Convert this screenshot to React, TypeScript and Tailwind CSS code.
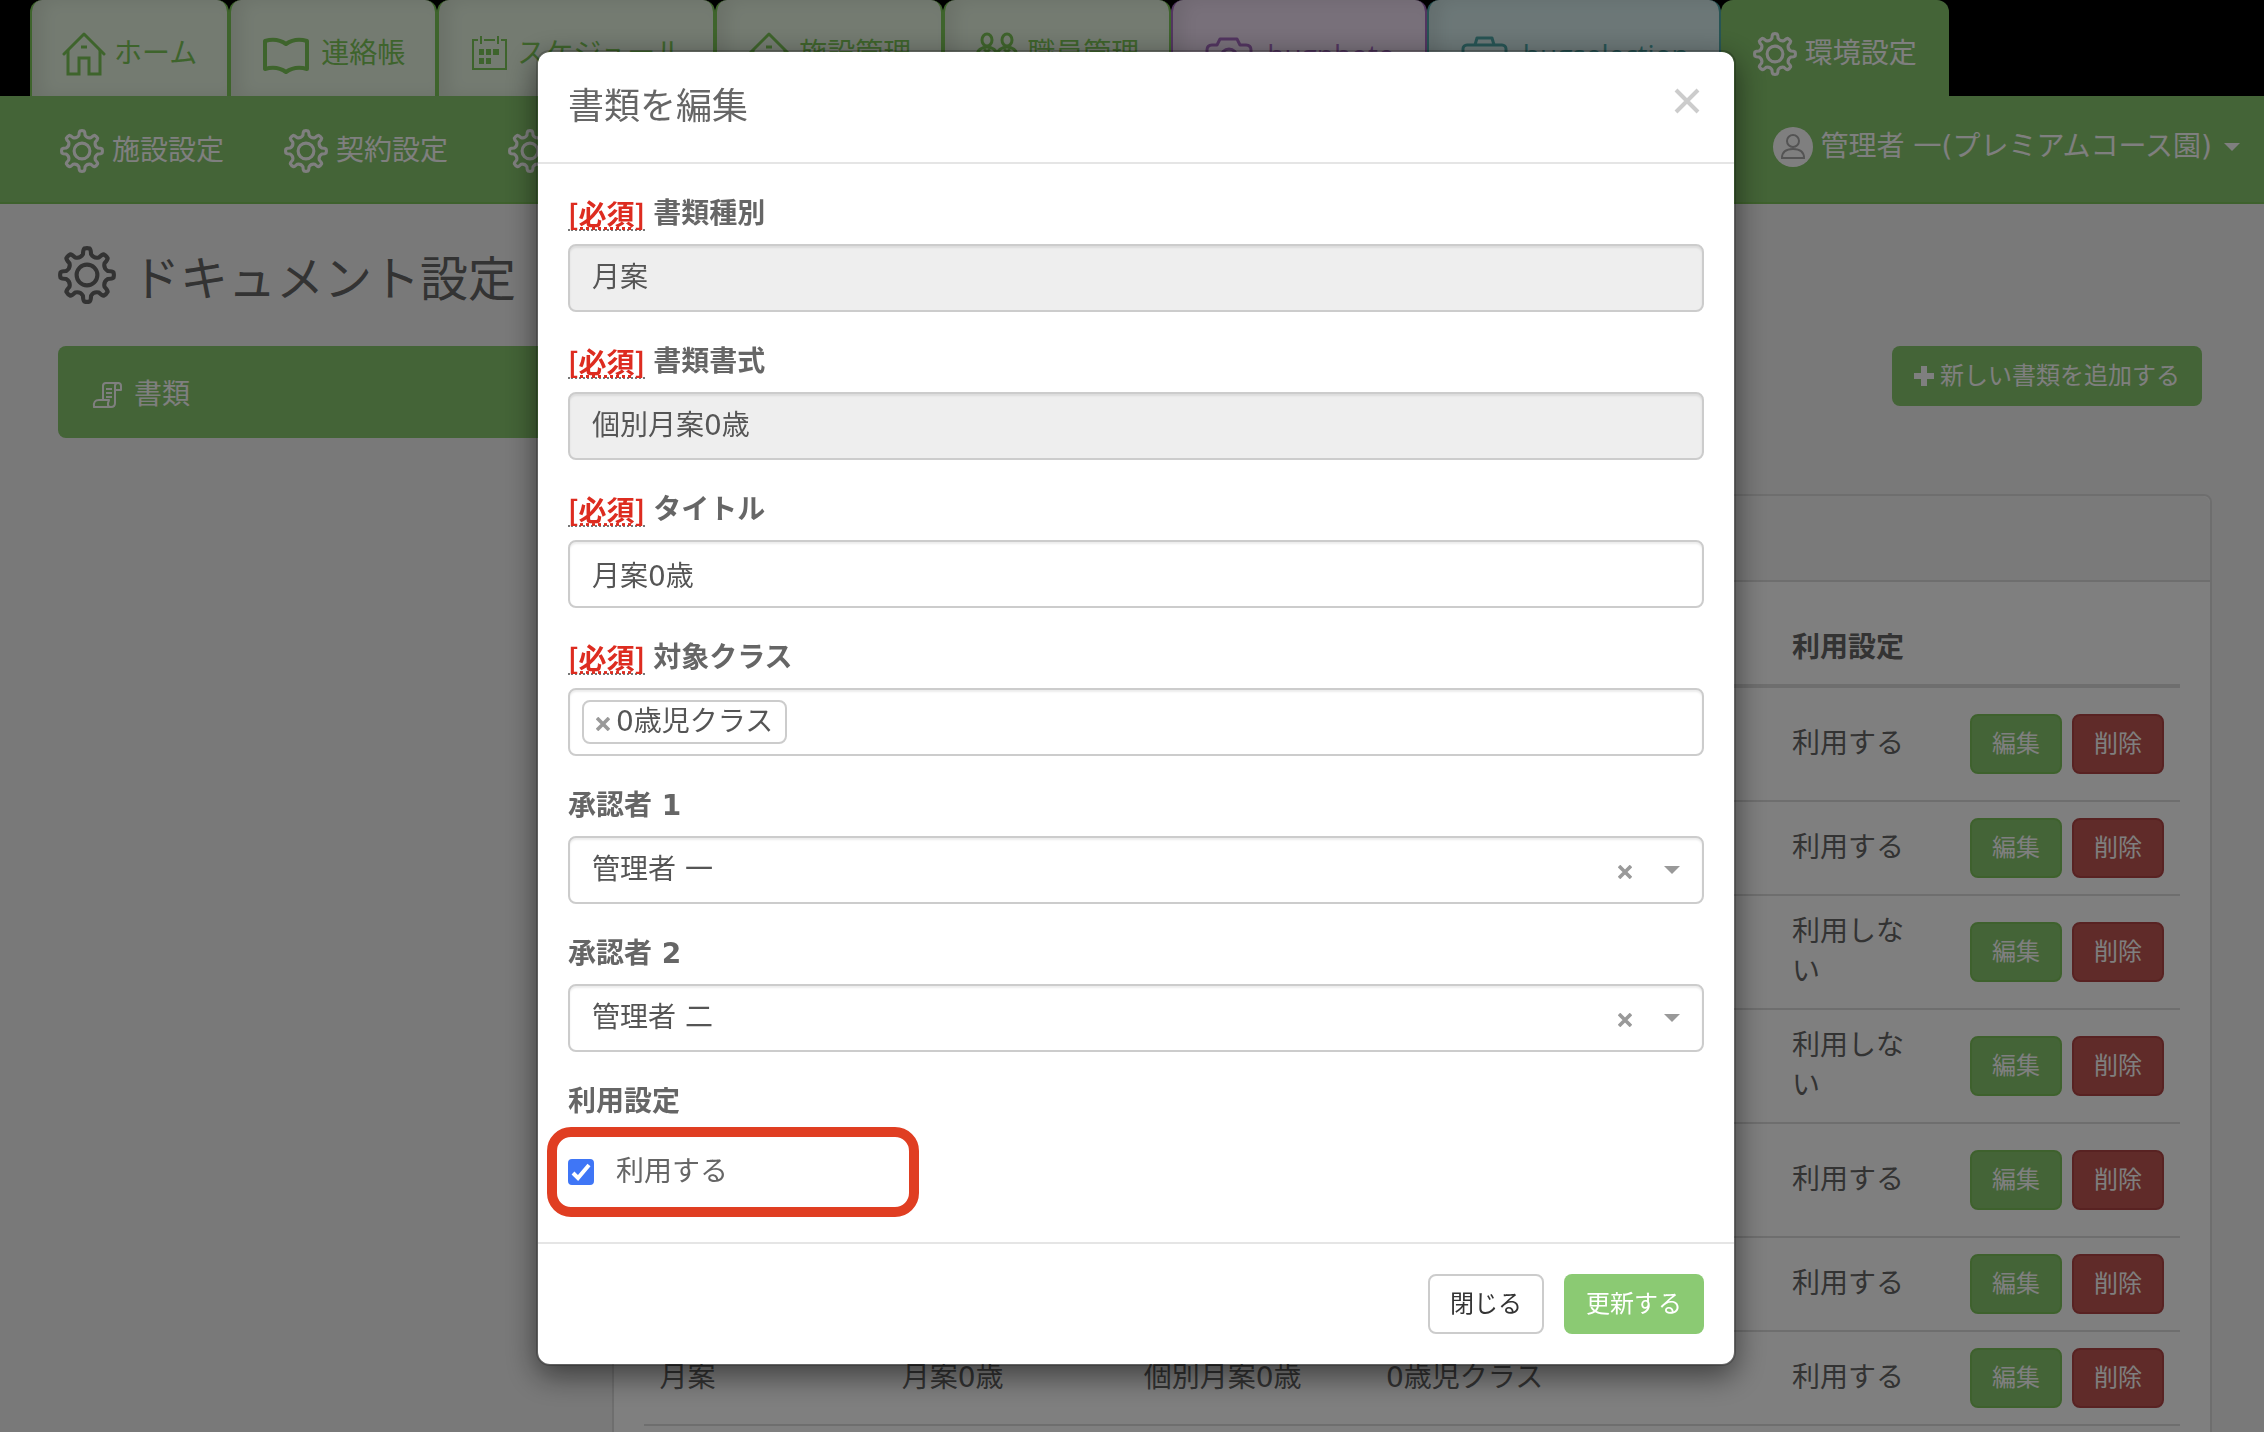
import { useState } from 'react';
import type { ReactNode } from 'react';

interface Tab {
  label: string;
  icon: ReactNode;
  className: string;
}

interface DocumentRow {
  id: number;
  type: string;
  title: string;
  format: string;
  classes: string;
  enabled: boolean;
}

const documents: DocumentRow[] = [
  { id: 1, type: '月案', title: '月案', format: '月案', classes: '0歳児クラス 1歳児クラス', enabled: true },
  { id: 2, type: '週案', title: '週案', format: '週案', classes: '1歳児クラス', enabled: true },
  { id: 3, type: '週案', title: '週案', format: '週案', classes: '2歳児クラス', enabled: false },
  { id: 4, type: '日案', title: '日案', format: '日案', classes: '2歳児クラス', enabled: false },
  { id: 5, type: '年案', title: '年案', format: '年案', classes: '0歳児クラス 1歳児クラス', enabled: true },
  { id: 6, type: '月案', title: '月案1歳', format: '個別月案1歳', classes: '1歳児クラス', enabled: true },
  { id: 7, type: '月案', title: '月案0歳', format: '個別月案0歳', classes: '0歳児クラス', enabled: true },
];

// eight teeth round a 48x48 box
const gearPath = (() => {
  const points: string[] = [];
  const at = (r: number, deg: number) => {
    const a = ((deg - 90) * Math.PI) / 180;
    return `${(24 + r * Math.cos(a)).toFixed(2)} ${(24 + r * Math.sin(a)).toFixed(2)}`;
  };
  for (let i = 0; i < 8; i++) {
    const c = i * 45;
    points.push(`${i === 0 ? 'M' : 'L'}${at(17.5, c - 11)}`);
    points.push(`Q${at(21, c - 9)} ${at(22, c - 6)}`);
    points.push(`Q${at(22.6, c)} ${at(22, c + 6)}`);
    points.push(`Q${at(21, c + 9)} ${at(17.5, c + 11)}`);
    points.push(`Q${at(14.6, c + 22.5)} ${at(17.5, c + 34)}`);
  }
  return `${points.join('')}Z`;
})();

function Gear({ className }: { className: string }) {
  return (
    <svg viewBox="0 0 48 48" fill="none" stroke="currentColor" strokeWidth="3.4" strokeLinejoin="round" className={className}>
      <path d={gearPath} />
      <circle cx="24" cy="24" r="8.6" />
    </svg>
  );
}

function House() {
  return (
    <svg viewBox="0 0 44 44" fill="none" stroke="currentColor" strokeWidth="3" className="size-11">
      <path d="M2 22 22 2l20 20" strokeLinecap="round" strokeLinejoin="round" />
      <path d="M6 18v24h11V26h10v16h11V18" />
      <path d="M19 15h6" />
    </svg>
  );
}

function Book() {
  return (
    <svg viewBox="0 0 52 44" fill="none" stroke="currentColor" strokeWidth="4" strokeLinejoin="round" className="h-11 w-[52px]">
      <path d="M4 9c7-2 14-2 21 3 7-5 14-5 21-3v28c-7-2-14-2-21 3-7-5-14-5-21-3Z" />
    </svg>
  );
}

function Calendar() {
  return (
    <svg viewBox="0 0 40 44" fill="none" stroke="currentColor" strokeWidth="2" className="h-11 w-10">
      <path d="M9 8H4v29h33V8h-5M15 8h11M12 4v8M29 4v8" />
      <path d="M10 20h5m2 0h5m2 0h6M10 29h5m2 0h5" strokeWidth="6" />
    </svg>
  );
}

function People() {
  return (
    <svg viewBox="0 0 44 44" fill="none" stroke="currentColor" strokeWidth="3" className="size-11">
      <ellipse cx="12" cy="8" rx="5" ry="6" />
      <ellipse cx="32" cy="8" rx="5" ry="6" />
      <path d="M2 40V24c0-6 5-9 10-9s10 3 10 9c0-6 5-9 10-9s10 3 10 9v16" />
      <path d="m9 17 3 3 3-3m14 0 3 3 3-3" />
    </svg>
  );
}

function Camera() {
  return (
    <svg viewBox="0 0 56 44" fill="none" stroke="currentColor" strokeWidth="3" strokeLinejoin="round" className="h-11 w-14">
      <path d="M17 7h17l3 6h6q5 0 5 5v16q0 5-5 5H9q-5 0-5-5V18q0-5 5-5h5Z" />
      <circle cx="26" cy="25" r="8" />
    </svg>
  );
}

function Briefcase() {
  return (
    <svg viewBox="0 0 56 44" fill="none" stroke="currentColor" strokeWidth="3" strokeLinejoin="round" className="h-11 w-14">
      <rect x="4" y="13" width="43" height="26" rx="4" />
      <path d="M16 13l2-7h15l2 7M4 24h43" />
    </svg>
  );
}

function Scroll() {
  return (
    <svg viewBox="0 0 30 26" fill="none" stroke="currentColor" strokeWidth="2" strokeLinejoin="round" className="h-[26px] w-[30px]">
      <path d="M11 18V4q0-3 3-3h12q-3 0-3 3v17q0 4-4 4H2q-1-7 5-7h10q-3 7 2 7" />
      <path d="M26 1q3 0 3 3v4h-6M14 7h6M14 11h6M14 15h6" />
    </svg>
  );
}

function Caret({ className }: { className: string }) {
  return (
    <svg viewBox="0 0 16 8" fill="currentColor" className={className}>
      <path d="M0 0h16L8 8Z" />
    </svg>
  );
}

function Cross({ className }: { className: string }) {
  return (
    <svg viewBox="0 0 14 14" fill="none" stroke="currentColor" strokeWidth="3.6" className={className}>
      <path d="m1 1 12 12M13 1 1 13" />
    </svg>
  );
}

const greenTab = 'border-[#7dc858] bg-[#e8f6e3] text-[#7dc858]';

const tabs: Tab[] = [
  { label: 'ホーム', icon: <House />, className: greenTab },
  { label: '連絡帳', icon: <Book />, className: greenTab },
  { label: 'スケジュール', icon: <Calendar />, className: greenTab },
  { label: '施設管理', icon: <House />, className: greenTab },
  { label: '職員管理', icon: <People />, className: greenTab },
  { label: 'hugphoto', icon: <Camera />, className: "border-[#a56bc0] bg-[#f0e0f4] font-['Open_Sans',sans-serif] text-[#a56bc0]" },
  { label: 'hugselection', icon: <Briefcase />, className: "border-[#4fa9a9] bg-[#d8efef] font-['Open_Sans',sans-serif] text-[#4fa9a9]" },
];

const subMenu = ['施設設定', '契約設定', 'ドキュメント設定'];

function Header() {
  return (
    <header>
      <nav className="flex h-24 items-start bg-black pl-[30px]">
        {tabs.map(tab => (
          <a
            key={tab.label}
            href="#"
            className={`flex h-24 shrink-0 items-center gap-2 rounded-t-xl border-x-2 px-[30px] pt-3 whitespace-nowrap inset-shadow-[10px_0_16px_rgba(0,0,0,0.08)] ${tab.className}`}
          >
            {tab.icon}
            {tab.label}
          </a>
        ))}
        <a href="#" className="flex h-24 shrink-0 items-center gap-2 rounded-t-xl bg-[#88c86e] px-8 pt-3 text-white">
          <Gear className="size-11" />
          環境設定
        </a>
      </nav>
      <div className="flex h-[108px] items-center justify-between border-b-2 border-[#7dc35a] bg-[#88c86e] pt-1 pr-6 pl-[60px] text-white">
        <nav className="flex gap-[60px]">
          {subMenu.map(label => (
            <a key={label} href="#" className="flex items-center gap-2">
              <Gear className="size-11" />
              {label}
            </a>
          ))}
        </nav>
        <button type="button" className="flex items-center gap-2 pb-2">
          <svg viewBox="0 0 40 40" className="size-10">
            <circle cx="20" cy="20" r="20" fill="currentColor" />
            <g fill="none" stroke="#a8a8a8" strokeWidth="2">
              <circle cx="20" cy="14" r="6" />
              <path d="M9 31q0-9 11-9t11 9Z" />
            </g>
          </svg>
          管理者 一(プレミアムコース園)
          <Caret className="ml-1 h-2 w-4" />
        </button>
      </div>
    </header>
  );
}

function DocumentTable() {
  return (
    <table className="w-full table-fixed text-left">
      <colgroup>
        <col />
        <col />
        <col />
        <col />
        <col className="w-[164px]" />
        <col className="w-[160px]" />
        <col className="w-[244px]" />
      </colgroup>
      <thead>
        <tr className="border-b-4 border-[#ddd]">
          <th className="p-4">書類種別</th>
          <th className="p-4">タイトル</th>
          <th className="p-4">書類書式</th>
          <th className="p-4">対象クラス</th>
          <th className="p-4">承認者</th>
          <th className="p-4">利用設定</th>
          <th className="p-4"></th>
        </tr>
      </thead>
      <tbody>
        {documents.map(doc => (
          <tr key={doc.id} className="border-t-2 border-[#ddd] first:border-t-0 last:border-b-2">
            <td className="p-4">{doc.type}</td>
            <td className="p-4">{doc.title}</td>
            <td className="p-4">{doc.format}</td>
            <td className="p-4">{doc.classes}</td>
            <td className="p-4"></td>
            <td className="p-4">{doc.enabled ? '利用する' : '利用しない'}</td>
            <td className="p-4">
              <div className="flex justify-end gap-[10px] text-2xl text-white">
                <button type="button" className="h-[60px] w-[92px] rounded-lg border-2 border-[#7dc35a] bg-[#88c86e]">
                  編集
                </button>
                <button type="button" className="h-[60px] w-[92px] rounded-lg border-2 border-[#b04444] bg-[#c05752]">
                  削除
                </button>
              </div>
            </td>
          </tr>
        ))}
      </tbody>
    </table>
  );
}

function Field({ id, label, required, children }: { id: string; label: string; required?: boolean; children: ReactNode }) {
  return (
    <div className="mb-[30px]">
      <label htmlFor={id} className="mb-[10px] flex h-10 items-center gap-2 font-bold">
        {required && (
          <abbr
            title="必須"
            className="border-b-2 border-dotted border-[#777] font-['Noto_Sans_CJK_JP',sans-serif] leading-8 text-[#dd2c20]"
          >
            [必須]
          </abbr>
        )}
        {label}
      </label>
      {children}
    </div>
  );
}

const inputClass =
  'block h-[68px] w-full appearance-none rounded-lg border-2 border-[#ccc] bg-white px-[22px] text-[#555] inset-shadow-[0_2px_2px_rgba(0,0,0,0.08)] disabled:bg-[#eee] disabled:opacity-100';

function ApproverSelect({ id, value, onChange }: { id: string; value: string; onChange: (value: string) => void }) {
  return (
    <div className="relative">
      <select id={id} value={value} onChange={e => onChange(e.target.value)} className={inputClass}>
        <option value=""></option>
        <option>管理者 一</option>
        <option>管理者 二</option>
      </select>
      <div className="pointer-events-none absolute inset-y-0 right-6 flex items-center gap-8 text-[#999]">
        <button type="button" aria-label="クリア" onClick={() => onChange('')} className="pointer-events-auto pt-1">
          <Cross className="size-[14px]" />
        </button>
        <Caret className="h-2 w-4" />
      </div>
    </div>
  );
}

function EditDialog() {
  const [title, setTitle] = useState('月案0歳');
  const [classes, setClasses] = useState(['0歳児クラス']);
  const [approver1, setApprover1] = useState('管理者 一');
  const [approver2, setApprover2] = useState('管理者 二');
  const [enabled, setEnabled] = useState(true);

  return (
    <div className="fixed inset-0 flex items-start justify-center overflow-hidden bg-black/50 pt-[50px] pl-2">
      <form
        role="dialog"
        aria-labelledby="dialog-title"
        onSubmit={e => e.preventDefault()}
        className="w-full max-w-[1200px] rounded-[14px] border-2 border-black/20 bg-white bg-clip-padding shadow-[0_10px_30px_rgba(0,0,0,0.5)]"
      >
        <div className="flex items-start justify-between border-b-2 border-[#e5e5e5] p-[30px]">
          <h2 id="dialog-title" className="text-4xl leading-[50px]">書類を編集</h2>
          <button type="button" aria-label="閉じる" className="px-1 py-[6px] text-[#ccc]">
            <svg viewBox="0 0 26 26" fill="none" stroke="currentColor" strokeWidth="4" className="size-[26px]">
              <path d="m2 2 22 22M24 2 2 24" />
            </svg>
          </button>
        </div>

        <div className="px-[30px] pt-[30px]">
          <Field id="doc-type" label="書類種別" required>
            <select id="doc-type" disabled className={inputClass}>
              <option>月案</option>
            </select>
          </Field>
          <Field id="doc-format" label="書類書式" required>
            <select id="doc-format" disabled className={inputClass}>
              <option>個別月案0歳</option>
            </select>
          </Field>
          <Field id="doc-title" label="タイトル" required>
            <input id="doc-title" type="text" value={title} onChange={e => setTitle(e.target.value)} className={inputClass} />
          </Field>
          <Field id="doc-classes" label="対象クラス" required>
            <div className="flex h-[68px] items-start gap-2 rounded-lg border-2 border-[#ccc] p-3 pt-[10px] text-[#555] inset-shadow-[0_2px_2px_rgba(0,0,0,0.08)]">
              {classes.map(name => (
                <span key={name} className="flex h-11 items-center gap-[6px] rounded-lg border-2 border-[#ccc] bg-white px-3">
                  <button
                    type="button"
                    aria-label={`${name}を外す`}
                    onClick={() => setClasses(classes.filter(c => c !== name))}
                    className="pt-1 text-[#999]"
                  >
                    <Cross className="size-[14px]" />
                  </button>
                  {name}
                </span>
              ))}
              <input id="doc-classes" type="text" className="h-11 min-w-0 grow outline-none" />
            </div>
          </Field>
          <Field id="approver-1" label="承認者 1">
            <ApproverSelect id="approver-1" value={approver1} onChange={setApprover1} />
          </Field>
          <Field id="approver-2" label="承認者 2">
            <ApproverSelect id="approver-2" value={approver2} onChange={setApprover2} />
          </Field>
          <Field id="doc-enabled" label="利用設定">
            <div className="relative flex h-20 items-center">
              <div className="pointer-events-none absolute -top-[5px] -left-[21px] h-[90px] w-[372px] rounded-3xl border-10 border-[#e03e22]"></div>
              <label className="flex items-center gap-[22px]">
                <span className="relative block size-[26px]">
                  <input
                    id="doc-enabled"
                    type="checkbox"
                    checked={enabled}
                    onChange={e => setEnabled(e.target.checked)}
                    className="block size-[26px] appearance-none rounded border-2 border-[#767676] checked:border-[#3f76f6] checked:bg-[#3f76f6]"
                  />
                  {enabled && (
                    <svg viewBox="0 0 26 26" fill="none" stroke="#fff" strokeWidth="4" className="pointer-events-none absolute inset-0">
                      <path d="m5 14 5 5L21 6" />
                    </svg>
                  )}
                </span>
                利用する
              </label>
            </div>
          </Field>
        </div>

        <div className="flex justify-end gap-5 border-t-2 border-[#e5e5e5] p-[30px] text-2xl">
          <button type="button" className="h-[60px] rounded-lg border-2 border-[#ccc] bg-white px-5 text-[#333]">
            閉じる
          </button>
          <button type="submit" className="h-[60px] rounded-lg bg-[#8bca73] px-[22px] text-white">
            更新する
          </button>
        </div>
      </form>
    </div>
  );
}

export default function App() {
  return (
    <div className="h-screen overflow-hidden bg-[#f3f3f3] font-['DejaVu_Sans','Noto_Sans_CJK_JP',sans-serif] text-[28px] leading-10 text-[#666]">
      <Header />
      <main className="pr-[22px] pl-7">
        <h1 className="flex items-center gap-4 px-[30px] py-8 text-5xl leading-[70px]">
          <Gear className="size-[58px]" />
          <span className="pt-2">ドキュメント設定</span>
        </h1>
        <div className="flex">
          <aside className="w-1/4 px-[30px]">
            <a href="#" className="flex h-[92px] items-center gap-3 rounded-lg bg-[#88c86e] px-[34px] pt-[6px] text-white">
              <Scroll />
              書類
            </a>
          </aside>
          <section className="w-3/4 px-[30px]">
            <div className="mb-[88px] flex justify-end pr-[10px]">
              <button type="button" className="flex h-[60px] items-center gap-[6px] rounded-lg bg-[#88c86e] px-[22px] text-2xl text-white">
                <svg viewBox="0 0 20 20" stroke="currentColor" strokeWidth="6" className="size-5">
                  <path d="M10 0v20M0 10h20" />
                </svg>
                新しい書類を追加する
              </button>
            </div>
            <div className="rounded-lg border-2 border-[#ddd] bg-white">
              <div className="h-[86px] rounded-t-lg border-b-2 border-[#ddd] bg-[#f5f5f5]"></div>
              <div className="p-[30px]">
                <DocumentTable />
              </div>
            </div>
          </section>
        </div>
      </main>
      <EditDialog />
    </div>
  );
}
